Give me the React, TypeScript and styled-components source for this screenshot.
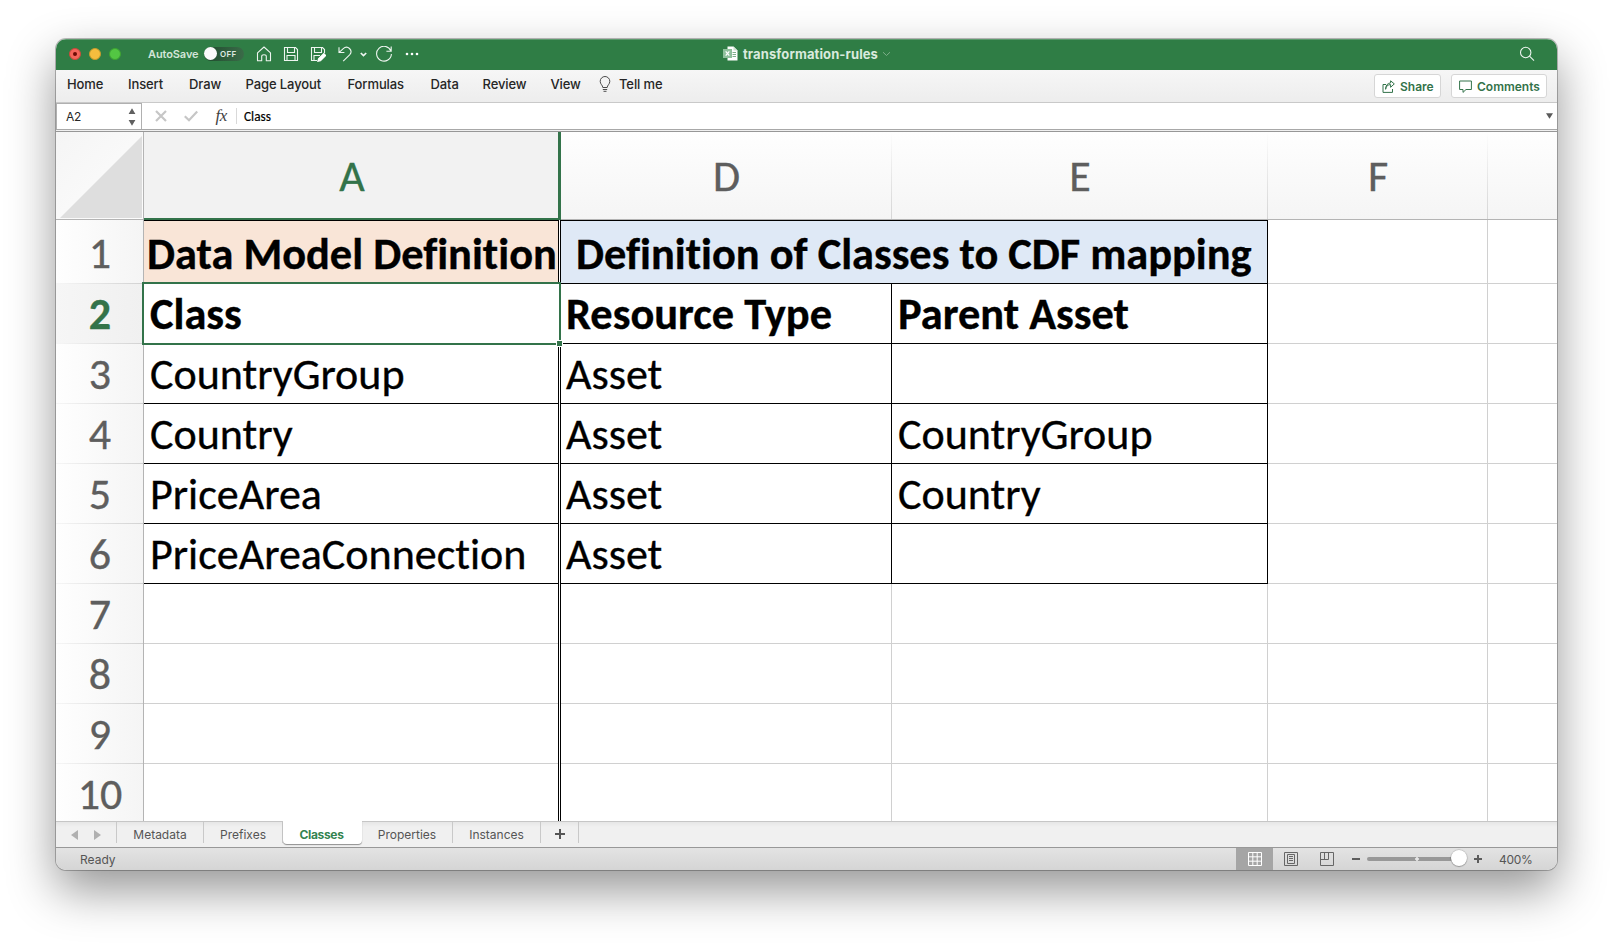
import React from 'react';
import styled, { createGlobalStyle, css } from 'styled-components';

const UI = `Inter, "Liberation Sans", sans-serif`;
const SHEET = `Calibri, Carlito, Lato, sans-serif`;
const GREEN = '#2f7d45';
const ACCENT = '#33734a';
const COLUMNS = '88px 417px 331px 376px 220px 1fr';

const GlobalStyle = createGlobalStyle`
  html, body { margin: 0; background: #fff; overflow: hidden; }
  *, *::before, *::after { box-sizing: border-box; }
`;

const Desktop = styled.main`
  display: flex;
  justify-content: flex-start;
  align-items: flex-start;
  width: 1613px;
  height: 944px;
  padding: 39px 56px 0;
  background: #fff;
`;

const Window = styled.section`
  display: flex;
  flex-direction: column;
  width: 1501px;
  height: 831px;
  border-radius: 10px;
  overflow: hidden;
  background: #fff;
  box-shadow: 0 0 0 1px rgba(0, 0, 0, 0.25), 0 20px 48px rgba(0, 0, 0, 0.42);
  font-family: ${UI};
`;

/* Title bar */
const TitleBar = styled.header`
  display: grid;
  grid-template-columns: 1fr auto 1fr;
  align-items: center;
  flex: none;
  height: 31px;
  padding-bottom: 2px;
  background: ${GREEN};
  box-shadow: inset 0 1px 0 rgba(255, 255, 255, 0.22);
`;

const QuickAccess = styled.div`
  display: flex;
  align-items: center;
  padding-left: 13px;
`;

const Lights = styled.div`
  display: flex;
  gap: 8px;
  margin-right: 27px;
`;

const Light = styled.span<{ $color: string; $edge: string }>`
  display: grid;
  place-items: center;
  width: 12px;
  height: 12px;
  border-radius: 50%;
  background: ${(p) => p.$color};
  border: 1px solid ${(p) => p.$edge};
`;

const UnsavedDot = styled.i`
  width: 4px;
  height: 4px;
  border-radius: 50%;
  background: #6e0b05;
`;

const AutoSave = styled.span`
  width: 56px;
  font-size: 11px;
  font-weight: 600;
  letter-spacing: -0.1px;
  color: #d3e5d8;
  white-space: nowrap;
`;

const Toggle = styled.span`
  display: flex;
  align-items: center;
  width: 40px;
  height: 14px;
  margin-right: 12px;
  border-radius: 7px;
  background: linear-gradient(90deg, #1f4a2d, #3a6b48);
  color: #dfe9e2;
  font-size: 8px;
  font-weight: 600;
  letter-spacing: 0.3px;
`;

const Knob = styled.i`
  width: 13px;
  height: 13px;
  margin-right: 3px;
  border-radius: 50%;
  background: #fbfbfb;
`;

const ToolIcon = styled.svg<{ $w?: number; $gap?: number }>`
  display: block;
  flex: none;
  width: ${(p) => p.$w ?? 16}px;
  height: 16px;
  margin-right: ${(p) => p.$gap ?? 11}px;
  fill: none;
  stroke: #eef5f0;
  stroke-width: 1.1;
`;

const DocTitle = styled.div`
  display: flex;
  align-items: center;
  padding-left: 1px;
  font-size: 13px;
  font-weight: 700;
  letter-spacing: 0.11px;
  color: #d9eadd;
  white-space: nowrap;
`;

const DocIcon = styled.svg`
  width: 15px;
  height: 15px;
  margin-right: 5px;
`;

const TitleChevron = styled.svg`
  width: 9px;
  height: 6px;
  margin-left: 4px;
  fill: none;
  stroke: #7eaf8a;
`;

const SearchArea = styled.div`
  display: flex;
  justify-content: flex-end;
  padding-right: 22px;
`;

/* Ribbon */
const Ribbon = styled.nav`
  display: flex;
  justify-content: space-between;
  align-items: center;
  flex: none;
  height: 33px;
  padding: 0 10px 0 11px;
  background: linear-gradient(#f6f6f6, #ededed);
  border-bottom: 1px solid #c9c9c9;
`;

const Menu = styled.div`
  display: grid;
  grid-template-columns: 61px 61px 56.5px 102px 83px 52px 68px 48px 20.5px auto;
  align-items: center;
  padding-bottom: 4px;
`;

const MenuItem = styled.span`
  font-size: 13px;
  font-weight: 500;
  letter-spacing: -0.1px;
  color: #262626;
  white-space: nowrap;
`;

const Bulb = styled.svg`
  width: 12px;
  height: 16px;
  fill: none;
  stroke: #4b4b4b;
`;

const Actions = styled.div`
  display: flex;
  gap: 10px;
`;

const ActionButton = styled.button<{ $w: number }>`
  display: flex;
  align-items: center;
  gap: 5px;
  width: ${(p) => p.$w}px;
  height: 24px;
  padding: 1px 0 0 7px;
  border: 1px solid #d6d6d6;
  border-radius: 3px;
  background: #fff;
  font: 600 12px ${UI};
  color: ${ACCENT};
  white-space: nowrap;

  svg {
    flex: none;
    width: 13px;
    height: 13px;
    fill: none;
    stroke: ${ACCENT};
  }
`;

/* Formula bar */
const FormulaBar = styled.div`
  display: flex;
  align-items: center;
  flex: none;
  height: 29px;
  background: linear-gradient(#fff 0 26px, #a8a8a8 26px 27px, #f0f0f0 27px 28px, #979797 28px 29px);
  padding-bottom: 3px;
`;

const NameBox = styled.div`
  display: flex;
  justify-content: space-between;
  align-items: center;
  width: 86px;
  height: 26px;
  padding: 0 5px 1px 9px;
  border: 1px solid #b0b0b0;
  border-width: 1px 1px 0 1px;
  font-size: 12px;
  letter-spacing: -0.3px;
  color: #262626;
`;

const Stepper = styled.svg`
  width: 8px;
  height: 18px;
  margin-top: 1px;
  fill: #606060;
`;

const FormulaIcons = styled.div`
  display: flex;
  align-items: center;
  justify-content: space-between;
  width: 95px;
  height: 16px;
  padding: 0 9px 0 13px;
  border-right: 1px solid #d9d9d9;

  svg {
    fill: none;
    stroke: #c6c6c6;
    stroke-width: 2.2;
  }
`;

const Fx = styled.span`
  font: italic 17px/16px "Liberation Serif", serif;
  letter-spacing: -0.4px;
  color: #3f3f3f;
  padding-bottom: 1px;
`;

const FormulaText = styled.span`
  flex: 1;
  padding: 1px 0 0 7px;
  font: 13.3px ${SHEET};
  color: #000;
  -webkit-text-stroke: 0.2px;
`;

const Expand = styled.svg`
  width: 7px;
  height: 6px;
  margin-right: 4px;
  fill: #5a5a5a;
`;

/* Grid */
const Sheet = styled.div`
  flex: 1;
  min-height: 0;
  overflow: hidden;
  font-family: ${SHEET};
  font-size: 44px;
  line-height: 54px;
  font-variant-ligatures: none;
  -webkit-text-stroke: 0.35px;
`;

const Row = styled.div<{ $h: number }>`
  display: grid;
  grid-template-columns: ${COLUMNS};
  height: ${(p) => p.$h}px;
`;

const Corner = styled.div`
  display: flex;
  align-items: flex-end;
  justify-content: flex-end;
  padding: 0 1px 1px 0;
  border-right: 1px solid #b4b4b4;
  border-bottom: 1px solid #b4b4b4;
  background: linear-gradient(135deg, #f5f5f5, #fdfdfd);

  svg {
    display: block;
    width: 82px;
    height: 82px;
    fill: #dedede;
  }
`;

const ColumnHead = styled.div<{ $selected?: boolean }>`
  display: flex;
  align-items: center;
  justify-content: center;
  color: #5e5e5e;
  border-bottom: 1px solid #b4b4b4;
  background: linear-gradient(transparent, #d6d6d6) right / 1px 100% no-repeat, linear-gradient(#fefefe, #f5f5f5);

  &:last-child {
    background: linear-gradient(#fefefe, #f5f5f5);
  }

  ${(p) =>
    p.$selected &&
    css`
      color: ${ACCENT};
      border: 0 solid ${ACCENT};
      border-width: 0 3px 2px 0;
      padding: 1px 0 0 2px;
      background: #f2f2f2;
    `}
`;

const RowHead = styled.div<{ $selected?: boolean }>`
  display: flex;
  align-items: center;
  justify-content: center;
  border-right: 1px solid #b4b4b4;
  padding: 0 0 1px 1px;
  color: ${(p) => (p.$selected ? ACCENT : '#5e5e5e')};
  font-weight: ${(p) => (p.$selected ? 700 : 400)};
  background: linear-gradient(90deg, #f6f6f6, #d2d2d2) bottom / 100% 1px no-repeat,
    ${(p) => (p.$selected ? 'linear-gradient(90deg, #f6f6f6, #f0f0f0)' : 'linear-gradient(90deg, #fefefe, #f5f5f5)')};
`;

const FirstRowHead = styled(RowHead)`
  padding-top: 2px;
`;

type Edge = 'double' | 'black' | 'grey' | 'none';

const edges: Record<Edge, string> = {
  double: '3px double #000',
  black: '1px solid #000',
  grey: '1px solid #d0d0d0',
  none: '0 none',
};

const Cell = styled.div<{
  $right?: Edge;
  $line?: string;
  $fill?: string;
  $bold?: boolean;
  $pad?: number;
  $top?: boolean;
  $span?: number;
}>`
  position: relative;
  display: flex;
  align-items: center;
  grid-column: span ${(p) => p.$span ?? 1};
  min-width: 0;
  padding: 0 0 1px ${(p) => p.$pad ?? 6}px;
  border-right: ${(p) => edges[p.$right ?? 'grey']};
  background: ${(p) => p.$fill ?? '#fff'};
  background-clip: padding-box;
  box-shadow: inset 0 -1px 0 ${(p) => p.$line ?? '#d0d0d0'}${(p) => (p.$top ? ', inset 0 1px 0 #000' : '')};
  color: #000;
  white-space: nowrap;
  ${(p) =>
    p.$bold &&
    css`
      font-weight: 700;
      font-size: 44.4px;
    `}
  ${(p) => p.$top && 'padding-top: 4px;'}
`;

const SelectedCell = styled(Cell)`
  z-index: 1;
  border-right-color: #fff;
`;

const Selection = styled.i`
  position: absolute;
  inset: -2px -3px -1px -2px;
  border: 2px solid ${ACCENT};

  &::after {
    content: '';
    position: absolute;
    right: -4px;
    bottom: -4px;
    width: 7px;
    height: 7px;
    border: 1px solid #fff;
    background: ${ACCENT};
  }
`;

/* Sheet tabs */
const TabBar = styled.div`
  display: flex;
  align-items: flex-start;
  flex: none;
  height: 27px;
  background: linear-gradient(#e6e6e6, #f0f0f0 5px);
  border-top: 1px solid #c6c6c6;
  border-bottom: 1px solid #989898;
`;

const TabArrows = styled.div`
  display: flex;
  justify-content: space-between;
  align-items: center;
  width: 61px;
  height: 21px;
  padding: 5px 15px 0;
  border-right: 1px solid #c9c9c9;

  svg {
    width: 7px;
    height: 10px;
    fill: #b0b0b0;
  }
`;

const Tab = styled.div<{ $w: number; $active?: boolean }>`
  display: flex;
  justify-content: center;
  align-items: center;
  width: ${(p) => p.$w}px;
  height: 21px;
  padding-top: 3px;
  border-right: 1px solid #c9c9c9;
  font-size: 12px;
  color: #555;
  ${(p) =>
    p.$active &&
    css`
      height: 23px;
      margin-top: -1px;
      padding: 4px 2px 0 0;
      border-radius: 0 0 4px 4px;
      border-right: 0;
      background: #fff;
      box-shadow: 0 1px 1px #8f8f8f;
      font-weight: 700;
      letter-spacing: -0.33px;
      color: #338350;
    `}

  svg {
    width: 10px;
    height: 10px;
    stroke: #555;
    stroke-width: 2;
  }
`;

/* Status bar */
const StatusBar = styled.footer`
  display: flex;
  align-items: center;
  flex: none;
  height: 22px;
  padding: 0 25px 0 24px;
  background: linear-gradient(#e3e3e3, #d5d5d5);
  font-size: 12px;
  color: #555;
`;

const Ready = styled.span`
  flex: 1;
`;

const Views = styled.div`
  display: flex;
  margin-right: 7px;
`;

const ViewButton = styled.span<{ $active?: boolean }>`
  display: grid;
  place-items: center;
  width: ${(p) => (p.$active ? 37 : 36)}px;
  height: 22px;
  background: ${(p) => (p.$active ? '#a5a5a5' : 'transparent')};

  svg {
    width: 14px;
    height: 14px;
    fill: none;
    stroke: ${(p) => (p.$active ? '#fff' : '#666')};
  }
`;

const ZoomStep = styled.svg`
  width: 8px;
  height: 8px;
  margin-bottom: 1px;
  stroke: #5c5c5c;
  stroke-width: 2;
`;

const Slider = styled.div`
  display: flex;
  align-items: center;
  width: 100px;
  height: 4px;
  margin: 0 7px;
  border-radius: 2px;
  background: radial-gradient(circle at 50px 2px, #e6e6e6 1.5px, transparent 2px), linear-gradient(#989898, #989898) 0 0 / 92px 4px no-repeat;
`;

const SliderThumb = styled.i`
  width: 16px;
  height: 16px;
  margin: -3px 0 0 84px;
  flex: none;
  border-radius: 50%;
  background: #fff;
  box-shadow: 0 0 1px 0.5px rgba(0, 0, 0, 0.22), 0 1px 1px rgba(0, 0, 0, 0.2);
`;

const ZoomValue = styled.span`
  width: 33px;
  margin-left: 17px;
  letter-spacing: -0.3px;
`;

const rows = [
  ['CountryGroup', 'Asset', ''],
  ['Country', 'Asset', 'CountryGroup'],
  ['PriceArea', 'Asset', 'Country'],
  ['PriceAreaConnection', 'Asset', ''],
];

const menuItems = ['Home', 'Insert', 'Draw', 'Page Layout', 'Formulas', 'Data', 'Review', 'View'];

export default function App() {
  return (
    <>
      <GlobalStyle />
      <Desktop>
        <Window>
          <TitleBar>
            <QuickAccess>
              <Lights>
                <Light $color="#f4655a" $edge="#c9493b">
                  <UnsavedDot />
                </Light>
                <Light $color="#f6bd3e" $edge="#c79a2c" />
                <Light $color="#53c643" $edge="#3da332" />
              </Lights>
              <AutoSave>AutoSave</AutoSave>
              <Toggle>
                <Knob />
                OFF
              </Toggle>
              <ToolIcon viewBox="0 0 16 16">
                <path d="M1.5 6.8 8 1l6.500 5.800V14.800H10.300V10.200Q10.300 8.700 8 8.700T5.700 10.200V14.800H1.500Z" strokeLinejoin="round" />
              </ToolIcon>
              <ToolIcon viewBox="0 0 16 16">
                <path d="M1.500 1.500H12.500L14.500 3.500V14.500H1.500ZM4.500 1.500V6.500H11.500V1.500M4 14.500V9.500H12V14.500" />
              </ToolIcon>
              <ToolIcon viewBox="0 0 16 16">
                <path d="M7 14.500H1.500V1.500H12.500L14.500 3.500V7M4.500 1.500V6.500H11.500V1.500M4 14.500V9.500H10" />
                <path d="M7.800 15.300 8.500 12.800 13.800 7.500 15.800 9.500 10.500 14.700Z" fill="#fff" stroke="#fff" />
              </ToolIcon>
              <ToolIcon viewBox="0 0 16 16" $gap={7}>
                <path d="M2 1.300V6.500H7.400M2.200 6.300 6 2.800C8 1 10.800 .9 12.500 2.500 14.500 4.500 14.300 7 12.600 8.800L6.200 15.200" />
              </ToolIcon>
              <ToolIcon viewBox="0 0 7 16" $w={7} $gap={8}>
                <path d="M.8 7 3.500 9.600 6.200 7" strokeWidth="1.700" />
              </ToolIcon>
              <ToolIcon viewBox="0 0 18 16" $w={18} $gap={12}>
                <path d="M15.900 5A7.400 7.400 0 1 0 16.400 8M16.200 .6V5.200H11.400" />
              </ToolIcon>
              <ToolIcon viewBox="0 0 14 16" $w={14}>
                <g fill="#fff" stroke="none">
                  <circle cx="2" cy="8" r="1.300" />
                  <circle cx="7" cy="8" r="1.300" />
                  <circle cx="12" cy="8" r="1.300" />
                </g>
              </ToolIcon>
            </QuickAccess>
            <DocTitle>
              <DocIcon viewBox="0 0 15 15">
                <path d="M4.500 .5H10.500L14.500 4.500V14.500H4.500Z" fill="#fff" />
                <path d="M10.500 .5V4.500H14.500" fill="#cfe3d4" />
                <path d="M9.500 6.500H13M9.500 8.500H13M9.500 10.500H13" stroke="#7eaf8a" />
                <rect x="0" y="3" width="9" height="9" fill="#8fc09c" />
                <path d="M2.700 5.300 6.300 9.700M6.300 5.300 2.700 9.700" stroke="#fff" strokeWidth="1.200" />
              </DocIcon>
              transformation-rules
              <TitleChevron viewBox="0 0 9 6">
                <path d="M1 1.200 4.500 4.500 8 1.200" />
              </TitleChevron>
            </DocTitle>
            <SearchArea>
              <ToolIcon viewBox="0 0 16 16" $gap={0}>
                <circle cx="6.700" cy="6.500" r="5.200" />
                <path d="M10.500 10.200 15 14.700" />
              </ToolIcon>
            </SearchArea>
          </TitleBar>

          <Ribbon>
            <Menu>
              {menuItems.map((label) => (
                <MenuItem key={label}>{label}</MenuItem>
              ))}
              <Bulb viewBox="0 0 12 16">
                <path d="M3.800 11.500C3.800 9.300 1.200 8.300 1.200 5.300A4.800 4.800 0 0 1 10.800 5.300C10.800 8.300 8.200 9.300 8.200 11.500ZM3.800 13.500H8.200M4.500 15.300H7.500" />
              </Bulb>
              <MenuItem>Tell me</MenuItem>
            </Menu>
            <Actions>
              <ActionButton $w={67}>
                <svg viewBox="0 0 13 13">
                  <path d="M4 4.500H1V12.400H10.500V9M3.600 9.300C4 6 6 4.600 8.600 4.600V7.300L12.300 3.900 8.600 .8V2.900C5.500 3.100 3.600 5.500 3.600 9.300Z" />
                </svg>
                Share
              </ActionButton>
              <ActionButton $w={96}>
                <svg viewBox="0 0 13 13">
                  <path d="M.6 1H12.400V9.500H7L4 12.400V9.500H.6Z" />
                </svg>
                Comments
              </ActionButton>
            </Actions>
          </Ribbon>

          <FormulaBar>
            <NameBox>
              A2
              <Stepper viewBox="0 0 8 18">
                <path d="M.6 6 4 .3 7.400 6ZM.6 12 4 17.700 7.400 12Z" />
              </Stepper>
            </NameBox>
            <FormulaIcons>
              <svg width="12" height="12" viewBox="0 0 12 12">
                <path d="M1 1 11 11M11 1 1 11" />
              </svg>
              <svg width="14" height="12" viewBox="0 0 14 12">
                <path d="M.8 6.200 5 10.300 13.200 1.500" />
              </svg>
              <Fx>fx</Fx>
            </FormulaIcons>
            <FormulaText>Class</FormulaText>
            <Expand viewBox="0 0 7 6">
              <path d="M0 .3H7L3.500 5.700Z" />
            </Expand>
          </FormulaBar>

          <Sheet>
            <Row $h={88}>
              <Corner>
                <svg viewBox="0 0 82 82">
                  <path d="M0 82H82V0Z" />
                </svg>
              </Corner>
              <ColumnHead $selected>A</ColumnHead>
              <ColumnHead>D</ColumnHead>
              <ColumnHead>E</ColumnHead>
              <ColumnHead>F</ColumnHead>
              <ColumnHead />
            </Row>
            <Row $h={64}>
              <FirstRowHead>1</FirstRowHead>
              <Cell $bold $top $right="double" $fill="#f9e5d7" $line="#000" $pad={3}>
                Data Model Definition
              </Cell>
              <Cell $bold $top $span={2} $right="black" $fill="#dfe9f6" $line="#000" $pad={15}>
                Definition of Classes to CDF mapping
              </Cell>
              <Cell />
              <Cell $right="none" />
            </Row>
            <Row $h={60}>
              <RowHead $selected>2</RowHead>
              <SelectedCell $bold $right="double" $line="#000">
                Class
                <Selection />
              </SelectedCell>
              <Cell $bold $right="black" $line="#000" $pad={5}>
                Resource Type
              </Cell>
              <Cell $bold $right="black" $line="#000">
                Parent Asset
              </Cell>
              <Cell />
              <Cell $right="none" />
            </Row>
            {rows.map(([name, type, parent], i) => (
              <Row key={name} $h={60}>
                <RowHead>{i + 3}</RowHead>
                <Cell $right="double" $line="#000">
                  {name}
                </Cell>
                <Cell $right="black" $line="#000" $pad={5}>
                  {type}
                </Cell>
                <Cell $right="black" $line="#000">
                  {parent}
                </Cell>
                <Cell />
                <Cell $right="none" />
              </Row>
            ))}
            {[7, 8, 9, 10].map((n) => (
              <Row key={n} $h={60}>
                <RowHead>{n}</RowHead>
                <Cell $right="double" />
                <Cell />
                <Cell />
                <Cell />
                <Cell $right="none" />
              </Row>
            ))}
          </Sheet>

          <TabBar>
            <TabArrows>
              <svg viewBox="0 0 7 10">
                <path d="M7 0V10L0 5Z" />
              </svg>
              <svg viewBox="0 0 7 10">
                <path d="M0 0V10L7 5Z" />
              </svg>
            </TabArrows>
            <Tab $w={87}>Metadata</Tab>
            <Tab $w={79}>Prefixes</Tab>
            <Tab $w={79} $active>
              Classes
            </Tab>
            <Tab $w={91}>Properties</Tab>
            <Tab $w={88}>Instances</Tab>
            <Tab $w={38}>
              <svg viewBox="0 0 10 10">
                <path d="M5 0V10M0 5H10" />
              </svg>
            </Tab>
          </TabBar>

          <StatusBar>
            <Ready>Ready</Ready>
            <Views>
              <ViewButton $active>
                <svg viewBox="0 0 14 14">
                  <path d="M.5 .5H13.500V13.500H.5ZM.5 4.800H13.500M.5 9.200H13.500M4.800 .5V13.500M9.200 .5V13.500" />
                </svg>
              </ViewButton>
              <ViewButton>
                <svg viewBox="0 0 14 14">
                  <path d="M.5 .5H13.500V13.500H.5ZM3.500 2.500H10.500V11.500H3.500ZM5 4.500H9M5 6.500H9M5 8.500H9" />
                </svg>
              </ViewButton>
              <ViewButton>
                <svg viewBox="0 0 14 14">
                  <path d="M.5 .5H13.500V13.500H.5ZM.5 7.500H8.500V.5M4.500 .5V7.500" />
                </svg>
              </ViewButton>
            </Views>
            <ZoomStep viewBox="0 0 8 8">
              <path d="M0 4H8" />
            </ZoomStep>
            <Slider>
              <SliderThumb />
            </Slider>
            <ZoomStep viewBox="0 0 8 8">
              <path d="M0 4H8M4 0V8" />
            </ZoomStep>
            <ZoomValue>400%</ZoomValue>
          </StatusBar>
        </Window>
      </Desktop>
    </>
  );
}
